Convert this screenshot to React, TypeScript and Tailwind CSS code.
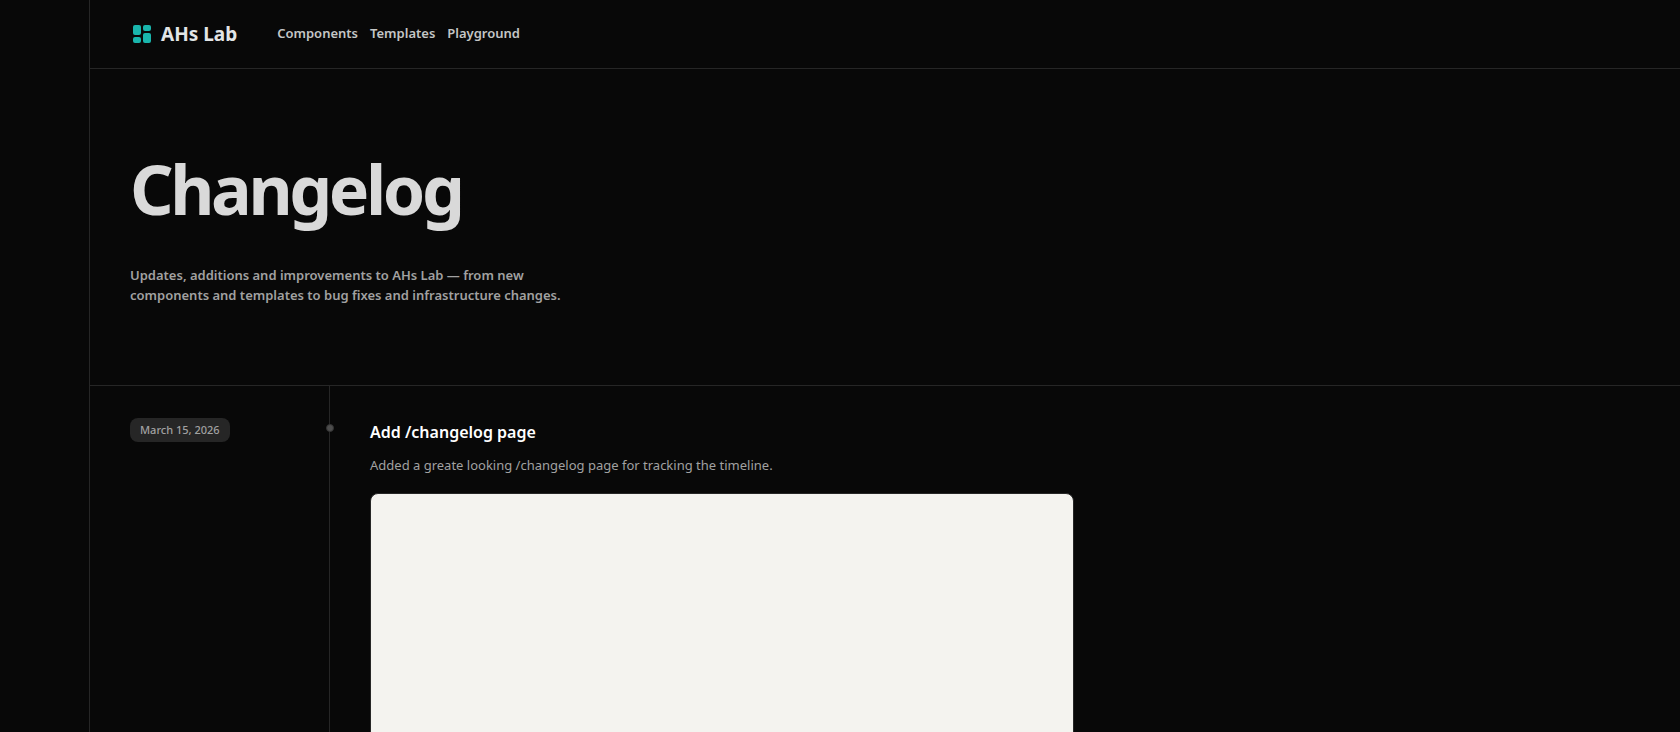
const navLinks = [
  { href: "#components", label: "Components" },
  { href: "#templates", label: "Templates" },
  { href: "#playground", label: "Playground" },
];

const entries = [
  {
    dateTime: "2026-03-15",
    date: "March 15, 2026",
    title: "Add /changelog page",
    description: "Added a greate looking /changelog page for tracking the timeline.",
  },
];

function Logo() {
  return (
    <svg viewBox="0 0 18 18" className="size-[18px] fill-[#19b5ac]" aria-hidden="true">
      <rect x="0" y="0" width="8" height="10" rx="2" />
      <rect x="10" y="0" width="8" height="6" rx="2" />
      <rect x="0" y="12" width="8" height="6" rx="2" />
      <rect x="10" y="8" width="8" height="10" rx="2" />
    </svg>
  );
}

function Header() {
  return (
    <header className="flex h-[69px] items-center gap-10 border-b border-[#262626] px-10">
      <a href="#home" className="flex items-center gap-2.5 pl-[3px] text-[19px] font-bold text-[#e2e5e6]">
        <Logo />
        AHs Lab
      </a>
      <nav className="flex items-center gap-3">
        {navLinks.map(({ href, label }) => (
          <a key={href} href={href} className="text-[13px] font-semibold text-[#c4c6c6]">
            {label}
          </a>
        ))}
      </nav>
    </header>
  );
}

export default function App() {
  return (
    <div className="h-screen overflow-x-hidden overflow-y-auto bg-[#080808] font-['Noto_Sans','Open_Sans',sans-serif] [scrollbar-width:none]">
      <div className="ml-[89px] min-h-full border-l border-[#262626]">
        <Header />

        <section className="border-b border-[#262626] px-10 py-20">
          <h1 className="pt-1 text-[68px] leading-[72px] font-bold tracking-tighter text-[#d9d9d9]">Changelog</h1>
          <p className="mt-10 max-w-md text-[13px] leading-5 font-semibold text-[#a1a1a1]">
            Updates, additions and improvements to AHs Lab — from new components and templates to bug
            fixes and infrastructure changes.
          </p>
        </section>

        <main>
          {entries.map(({ dateTime, date, title, description }) => (
            <article key={dateTime} className="flex">
              <div className="flex w-60 shrink-0 items-start border-r border-[#262626] px-10 pt-8">
                <time
                  dateTime={dateTime}
                  className="flex h-6 items-center rounded-lg bg-[#262626] px-2.5 text-[11px] font-medium text-[#a1a1a1]"
                >
                  {date}
                </time>
              </div>
              <div className="relative min-w-0 flex-1 px-10 pt-8 pb-16">
                <span className="absolute top-[38px] -left-1 size-2 rounded-full border border-[#333333] bg-[#4d4d4d]" />
                <h2 className="text-base leading-7 font-semibold text-white">{title}</h2>
                <p className="mt-2 text-[13px] leading-[22px] text-[#a1a1a1]">{description}</p>
                <div className="mt-[17px] aspect-video w-full max-w-[704px] rounded-lg border border-[#262626] bg-[#f4f3ef]" />
              </div>
            </article>
          ))}
        </main>
      </div>
    </div>
  );
}
